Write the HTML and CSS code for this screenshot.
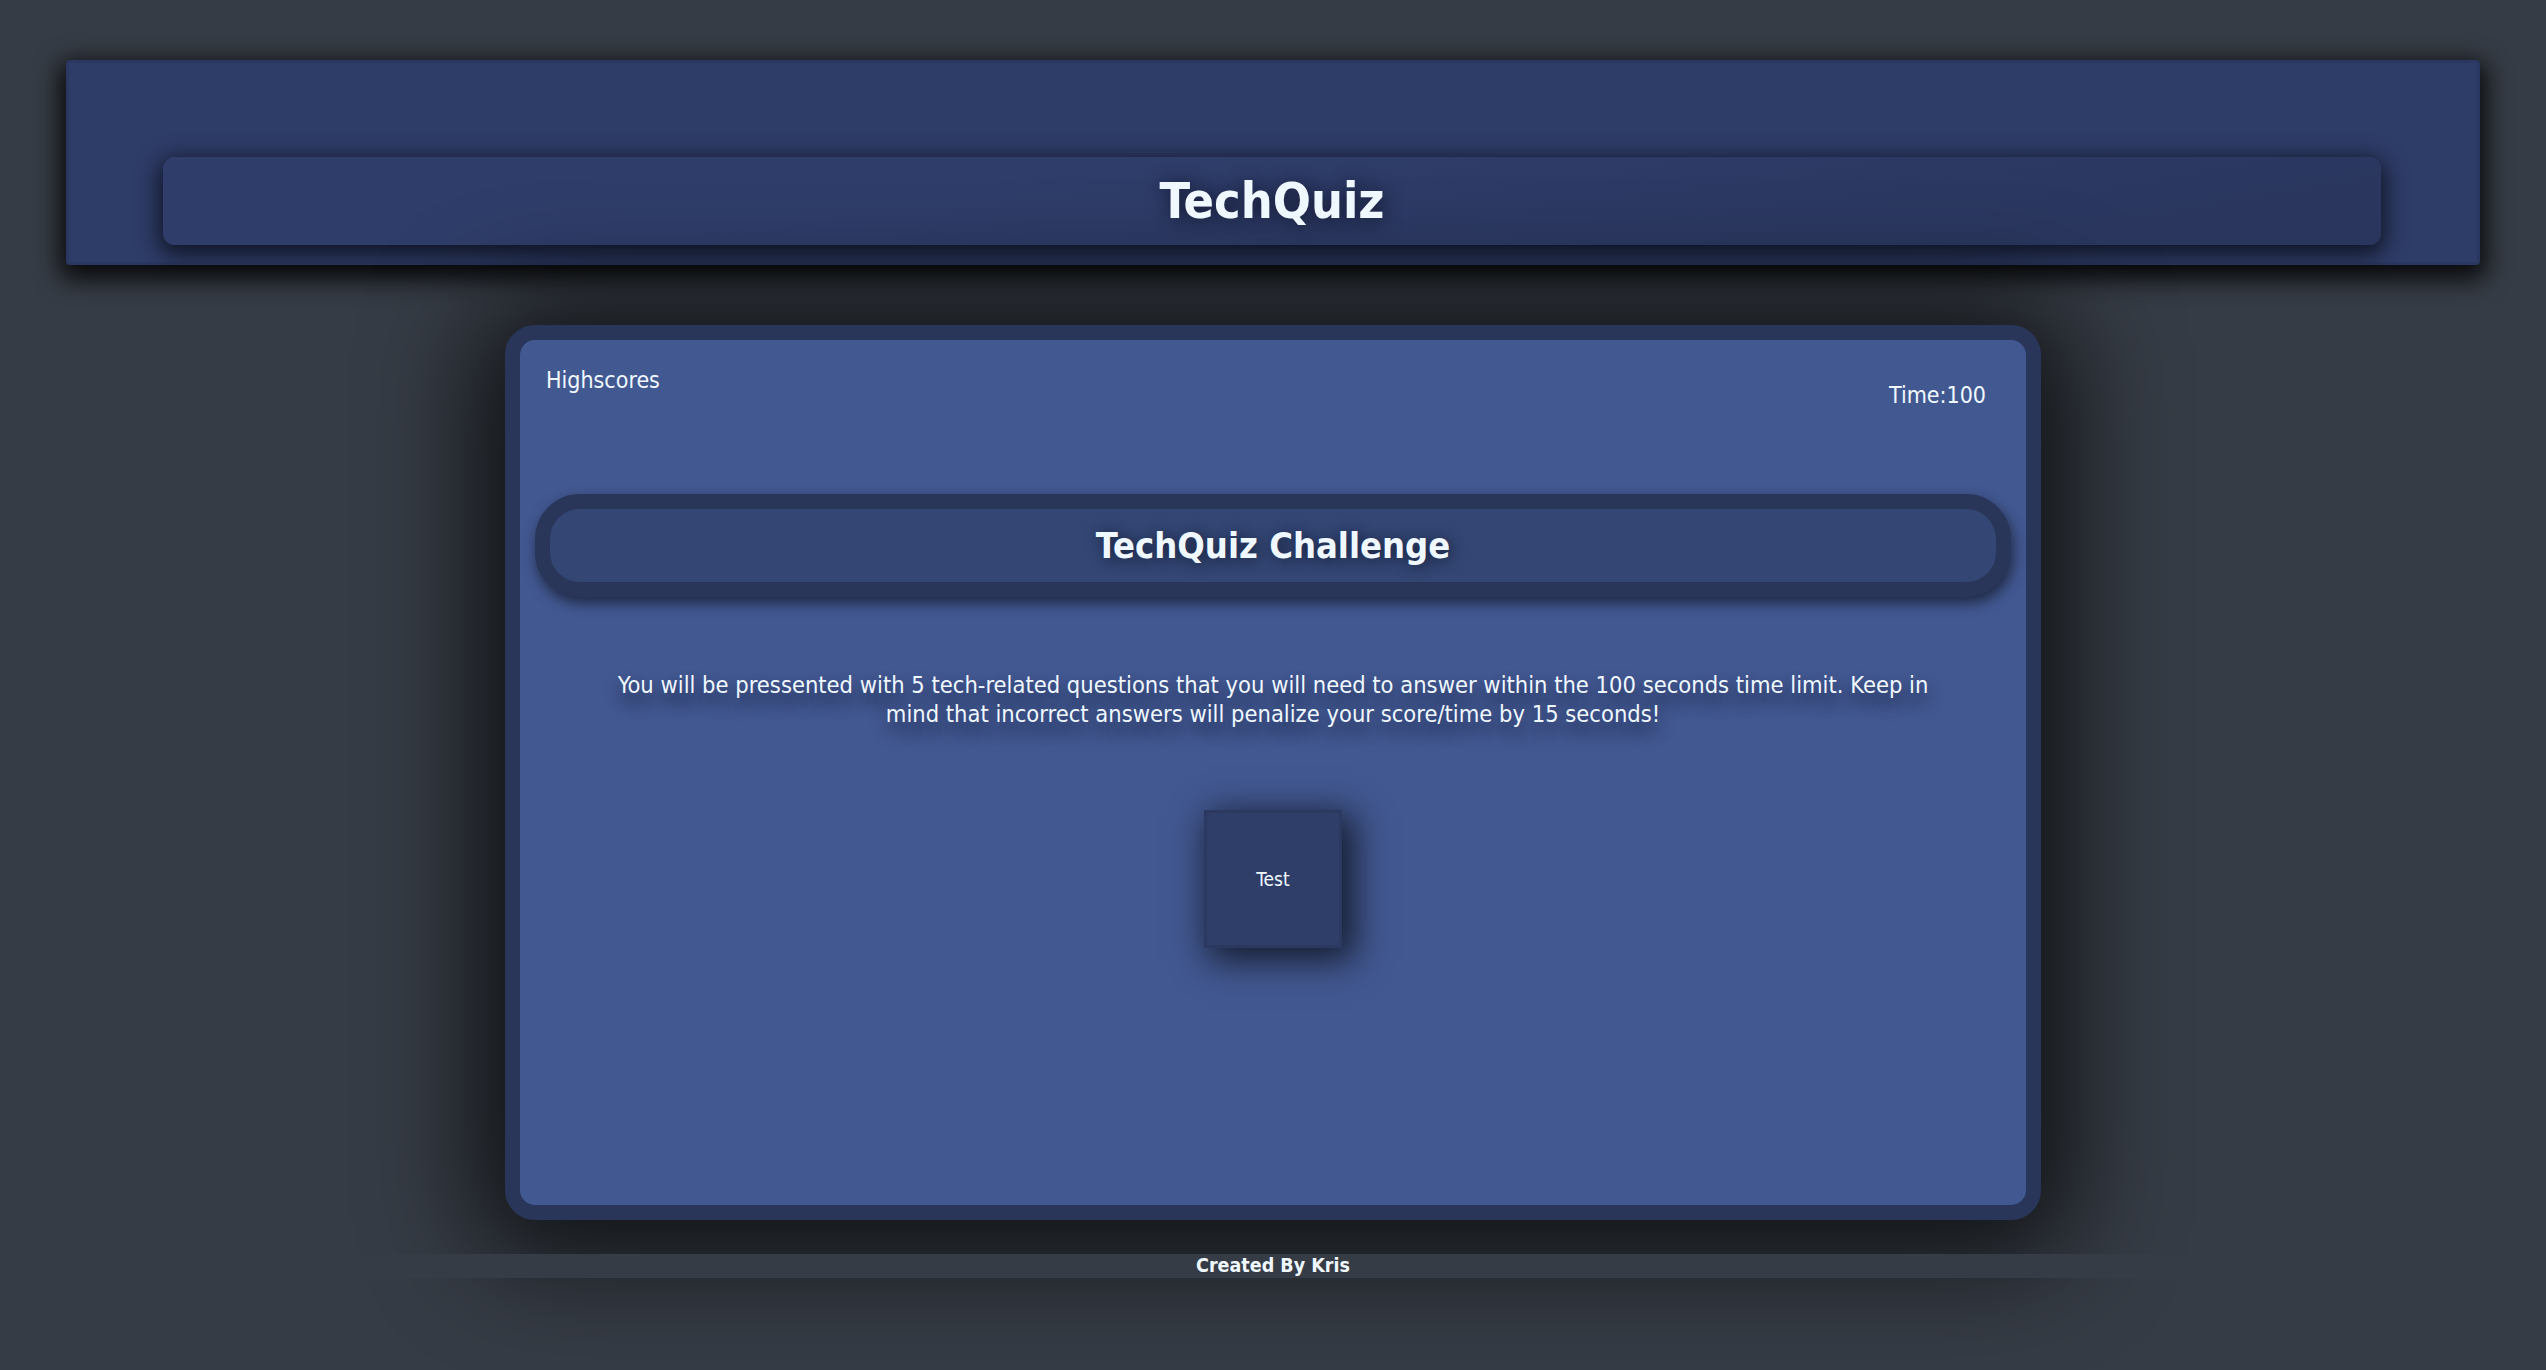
FILE: index.html
```html
<!DOCTYPE html>
<html lang="en">
<head>
<meta charset="utf-8">
<title>TechQuiz</title>
<link rel="stylesheet" href="styles.css">
</head>
<body>
<header class="site-header">
  <div class="header-inner">
    <h1 class="site-title">TechQuiz</h1>
  </div>
</header>

<main class="quiz-card">
  <div class="quiz-inner">
    <div class="top-bar">
      <a class="highscores" href="#">Highscores</a>
      <p class="timer">Time:100</p>
    </div>
    <div class="challenge-pill">
      <h2 class="challenge-title">TechQuiz Challenge</h2>
    </div>
    <p class="intro">You will be pressented with 5 tech-related questions that you will need to answer within the 100 seconds time limit. Keep in mind that incorrect answers will penalize your score/time by 15 seconds!</p>
    <div class="start-wrap">
      <button class="start-btn" type="button">Test</button>
    </div>
  </div>
</main>

<footer class="site-footer">Created By Kris</footer>
</body>
</html>
```

FILE: styles.css
```css
html, body {
  margin: 0;
  padding: 0;
}

body {
  background: #363c45;
  color: #f0f8ff;
  font-family: Tahoma, "DejaVu Sans Condensed", "DejaVu Sans", sans-serif;
  font-stretch: condensed;
  min-height: 1370px;
  overflow: hidden;
}

.site-header {
  margin: 60px 66px 0;
  padding: 94px 96px 17px 94px;
  background: #2e3c68;
  border: 3px solid #2a3760;
  border-radius: 4px;
  box-shadow: 0 8px 24px 6px rgba(0, 0, 0, 0.85);
}

.header-inner {
  height: 88px;
  display: flex;
  align-items: center;
  justify-content: center;
  border-radius: 12px;
  background: linear-gradient(170deg, #2f3d6a 35%, #29355c 100%);
  box-shadow: 0 6px 22px 4px rgba(0, 0, 0, 0.65);
}

.site-title {
  margin: 0;
  font-size: 50px;
  font-weight: bold;
  line-height: 1;
  color: #f0f8ff;
  text-shadow: 2px 2px 18px rgba(10, 14, 30, 0.75);
}

.quiz-card {
  display: block;
  width: 1506px;
  margin: 60px auto 0;
  border: 15px solid #29365a;
  border-radius: 30px;
  background: #29365a;
  box-shadow: 0 10px 110px 26px rgba(0, 0, 0, 0.75);
}

.quiz-inner {
  height: 865px;
  background: #425891;
  border-radius: 15px;
  display: flex;
  flex-direction: column;
}

.top-bar {
  display: flex;
  justify-content: space-between;
  align-items: flex-start;
  padding: 0 40px 0 26px;
}

.highscores {
  margin-top: 26px;
  font-size: 23px;
  line-height: 29px;
  color: #f0f8ff;
  text-decoration: none;
}

.timer {
  margin: 41px 0 0;
  font-size: 23px;
  line-height: 29px;
}

.challenge-pill {
  margin: 84px 15px 0;
  height: 73px;
  border: 15px solid #29365a;
  border-radius: 45px;
  background: #334674;
  display: flex;
  align-items: center;
  justify-content: center;
  box-shadow: 2px 6px 14px rgba(0, 0, 0, 0.55);
}

.challenge-title {
  margin: 0;
  font-size: 36px;
  font-weight: bold;
  line-height: 1;
  color: #f0f8ff;
  text-shadow: 2px 2px 14px rgba(10, 14, 30, 0.7);
}

.intro {
  width: 1330px;
  margin: 74px auto 0;
  text-align: center;
  font-size: 23.5px;
  line-height: 29px;
  text-shadow: 0 10px 16px rgba(15, 20, 45, 0.8);
}

.start-wrap {
  display: flex;
  justify-content: center;
  margin-top: 81px;
}

.start-btn {
  width: 138px;
  height: 138px;
  padding: 0;
  background: #2f3d69;
  border: 3px solid #2b385f;
  color: #f0f8ff;
  font-family: inherit;
  font-stretch: condensed;
  font-size: 19px;
  box-shadow: 8px 8px 34px 4px rgba(0, 0, 0, 0.7);
}

.site-footer {
  margin-top: 34px;
  background: #363c45;
  text-align: center;
  font-size: 19.5px;
  font-weight: bold;
  line-height: 24px;
  position: relative;
}
```
